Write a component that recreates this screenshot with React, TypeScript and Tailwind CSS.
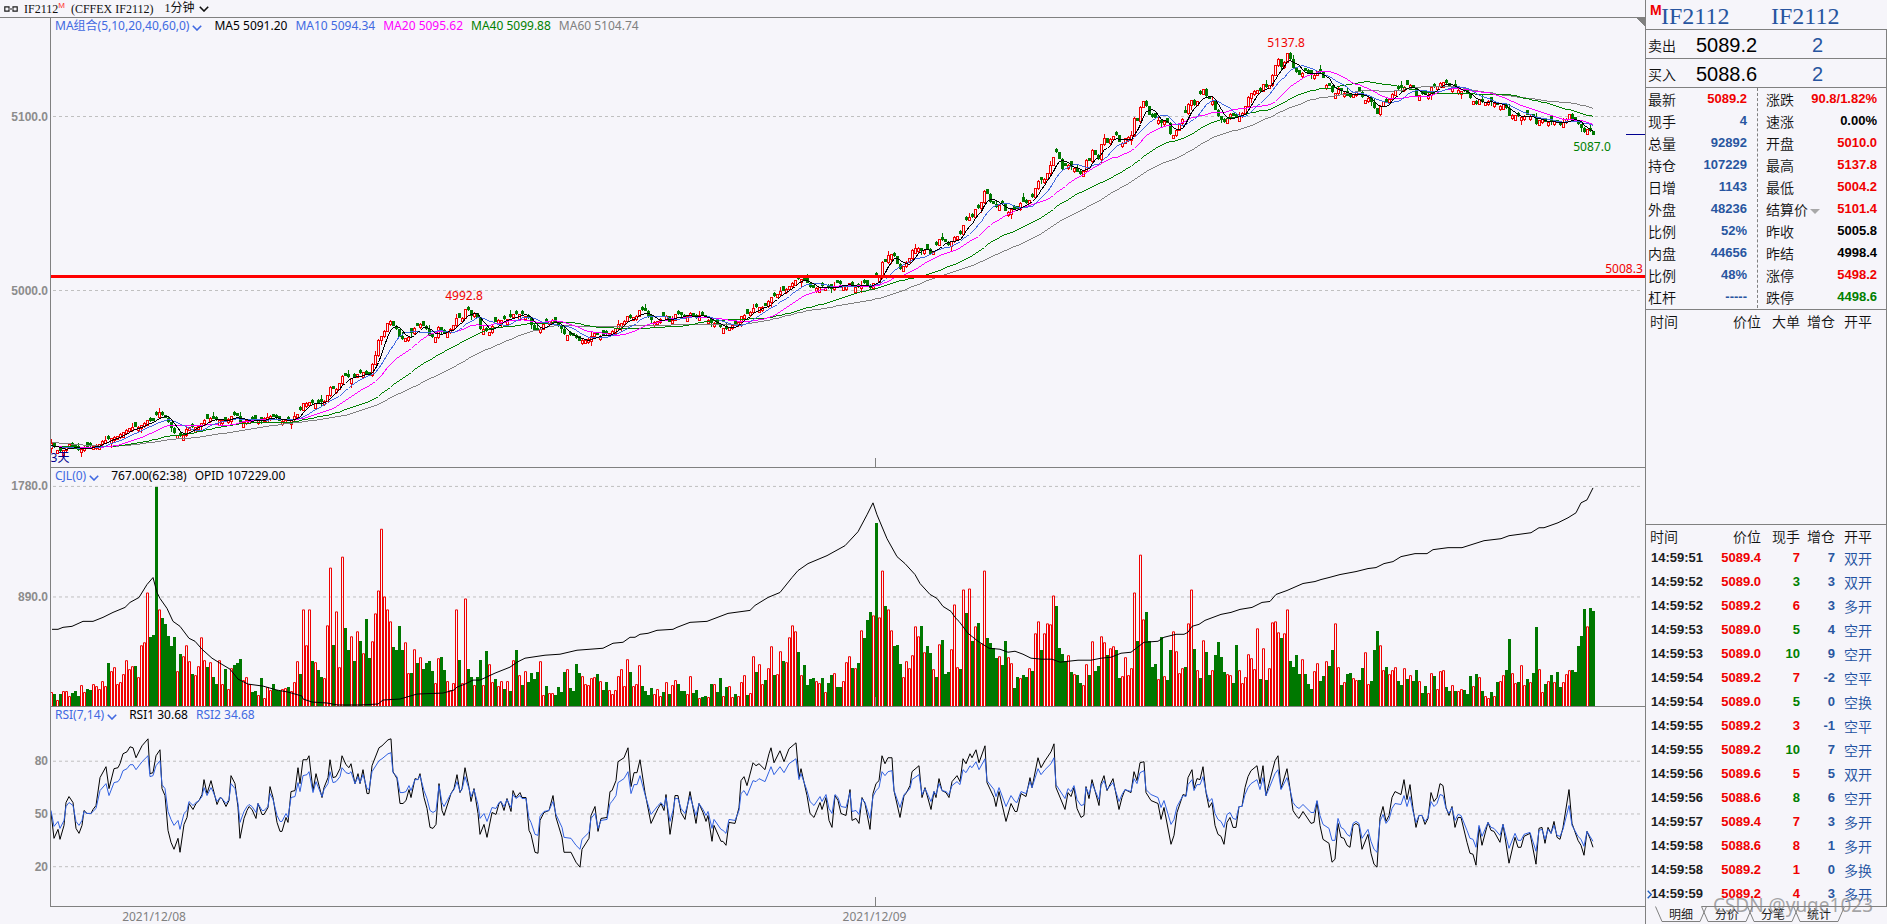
// Futures terminal: one-minute candles with moving averages, volume / open
// interest, RSI, and the quote panel with the latest trades.
//
// Series are kept in plot units (one bar every 3 units, y pointing down), so
// each pane only needs a viewBox to show its own slice.

import clsx from "clsx";
import type { ReactNode } from "react";

type Point = [number, number];

const FIRST_X = 50;
const BAR_STEP = 3;
const PLOT_LEFT = 51;
const PLOT_WIDTH = 1594;
const VOLUME_BASE = 706;

// Bar heights; positive closes up (red), negative closes down (green).
const VOLUMES: number[] = [
  14, -12, 6, -12, 15, 15, 10, -13, -15, -10, 21, 14, -17, -16, 22, 20, 17, 25, 20, -43,
  35, 39, 22, 24, 32, 46, 37, 40, -40, 29, 61, 64, 114, -69, -71, -220, 97, -88, -82, -70,
  -60, -69, 35, -52, 50, 61, 45, -32, 31, 40, 69, 46, -39, 44, -29, -22, 46, 22, -37, 17,
  38, -41, -43, -47, 26, 29, 22, -14, -15, 11, -28, 8, 19, 16, -22, -16, -15, 17, 18, -19,
  15, 24, 45, -32, 97, 61, 97, -45, 44, -36, -29, 28, 81, 139, -61, 95, 39, 150, -78, -56,
  70, -45, 75, -65, 53, -87, -48, 65, 93, 116, 178, 110, 97, 85, -59, -56, -80, -56, 64, 33,
  -33, 57, -43, 49, -37, -43, -45, -35, 23, 48, -49, -36, 25, 16, 23, 97, -46, 23, 108, -37,
  -29, 21, -29, -46, 21, -55, 42, 24, -27, 20, 25, -17, 25, -15, 46, -56, 31, -21, 35, -24,
  -33, -27, -34, 45, 11, -20, 13, 13, -11, -19, -14, -34, 37, -18, -15, -42, -33, 30, 22, 21,
  28, 29, -32, 25, -16, -24, 16, 12, 16, 30, 37, 20, 47, -34, 20, 22, 41, -20, -15, -11,
  -18, 12, 17, 10, -14, 24, -12, 21, 26, -22, -15, -15, 12, 30, -13, -16, 8, -9, -10, 9,
  -22, 22, -14, -28, 10, -19, 20, 9, -12, 10, 24, 31, -11, 13, 50, -34, 42, 22, -26, 38,
  60, -31, 32, 55, -45, 44, 69, 81, 75, -54, 31, -41, -21, -27, -28, 25, 23, -28, 14, -23,
  -31, 33, -19, -19, 25, 44, 50, -38, 38, -43, 76, -68, -86, -94, 91, -184, 89, 136, -100, 97,
  76, -60, -61, -42, 29, 45, 38, 51, 80, 70, -80, 54, -60, -53, 37, -29, 62, -66, -32, -34,
  57, 102, 39, -37, 117, -93, 118, -65, 80, -83, 63, 136, -68, -63, -58, -48, 50, -41, -65, 49,
  43, -18, -29, 28, -31, -29, 38, -35, 73, 85, -56, 73, 83, 82, 111, -100, -58, -52, -45, 51,
  -34, 32, -31, -23, 21, 42, -31, 65, -35, -40, 70, 64, -51, 58, 60, -56, -28, 30, 49, 31,
  38, 114, -65, 152, 87, -94, -65, -39, -42, 27, -69, 30, -26, -56, 75, 55, 33, 38, -39, 83,
  117, -57, 36, -28, 66, -54, -31, 36, -51, -64, -49, -34, 32, 31, -23, -61, 36, 23, 29, 52,
  48, 37, 78, -27, 58, -26, 38, 84, 85, 74, -68, 73, 97, -45, -39, -51, -32, 47, -32, -22,
  -17, 35, 43, -25, -30, 45, -40, -56, 83, 39, -21, 24, -32, -33, 28, 26, -26, -38, 54, 22,
  -25, -56, -75, 61, 36, -39, 32, 36, 39, -25, -21, 38, -27, 31, -25, -36, 25, -13, -20, 13,
  33, -30, 17, 35, 36, -19, -15, 21, -15, 15, 17, -16, -12, -30, 20, -32, 29, -15, 10, 8,
  -14, 10, -24, 25, 31, -36, -67, 33, 23, -24, 41, 21, -27, 24, -33, -79, 37, 14, -22, 25,
  -31, 24, -34, -19, 24, 32, 36, -36, -34, -60, -70, -97, 80, -98, -95,
];

const CLOSE_PATH = `
51,442 56,449 62,451 70,443 74,448 79,450 85,447 99,445 103,440 113,438 122,433 131,427 138,427 144,423 148,420
153,422 156,415 160,412 163,416 167,419 171,427 175,434 183,437 185,430 190,427 197,427 204,420 211,418 218,420
228,420 233,414 238,416 241,424 245,420 261,420 270,416 276,417 279,421 290,420 296,415 300,411 303,403 310,402
315,403 324,402 327,396 331,386 335,391 338,387 343,375 349,377 354,378 358,373 363,372 370,375 373,362 376,353
379,337 383,335 385,329 388,322 392,321 394,327 397,329 400,339 405,338 410,336 414,328 420,324 426,328 430,337
436,337 439,325 442,332 447,333 453,326 457,317 462,319 466,307 469,310 471,316 475,312 478,319 481,331 485,327
488,335 492,327 497,320 508,319 514,314 523,314 528,317 532,326 536,332 541,329 544,323 554,320 558,325 561,328
564,334 574,336 580,341 588,339 594,333 599,336 605,335 614,330 619,323 624,322 628,315 631,318 637,316 640,309
646,311 649,318 655,322 662,318 667,316 670,323 674,318 676,313 681,314 685,319 690,313 696,318 701,314 706,318
712,323 717,323 721,327 726,329 731,326 739,322 742,315 749,314 754,307 765,307 771,297 776,296 781,290 785,291
790,285 796,279 801,279 806,280 810,287 815,288 824,286 833,289 836,283 846,286 850,282 855,287 860,287 863,283
867,284 871,289 874,282 877,275 880,277 883,259 886,262 889,254 894,254 896,262 901,270 905,263 909,259 913,249
918,247 922,252 927,248 931,255 935,248 939,239 943,240 949,245 953,238 960,235 964,223 970,216 973,217 976,207
980,209 984,191 987,192 990,202 994,204 998,208 1001,201 1005,210 1007,213 1012,208 1017,210 1021,202 1028,203
1031,196 1033,197 1036,186 1039,180 1045,179 1050,166 1056,151 1059,157 1062,170 1067,164 1075,168 1079,174
1083,173 1087,158 1090,162 1092,149 1099,160 1101,145 1105,137 1109,146 1111,137 1116,134 1121,146 1124,139
1132,135 1134,118 1139,122 1141,102 1145,100 1148,112 1151,117 1157,118 1162,123 1166,120 1169,126 1171,136
1175,135 1178,125 1184,117 1188,105 1192,99 1195,106 1199,98 1203,88 1207,97 1212,100 1216,111 1219,117 1225,122
1230,114 1235,117 1241,115 1244,111 1248,98 1252,92 1257,89 1260,92 1264,83 1268,90 1273,73 1276,63 1279,58
1282,69 1285,60 1288,52 1291,60 1294,70 1300,75 1305,71 1314,76 1319,69 1323,76 1325,84 1331,87 1334,96 1338,87
1344,93 1350,98 1355,92 1361,92 1364,101 1369,98 1373,105 1378,115 1382,100 1388,102 1393,93 1396,89 1403,88
1410,84 1414,88 1417,97 1421,93 1428,96 1432,86 1437,87 1441,82 1446,82 1450,87 1457,90 1466,91 1470,98 1474,101
1477,105 1480,98 1484,104 1487,100 1494,103 1501,106 1505,103 1509,116 1514,114 1521,117 1528,115 1534,117
1537,125 1541,117 1546,123 1553,120 1560,125 1566,120 1569,113 1573,120 1578,123 1584,132 1589,128 1593,135`;

const OPEN_INTEREST_PATH = `
52,629 58,629 63,627 72,626 83,621 93,621 103,617 113,612 125,607 130,602 139,597 147,584 153,577 157,592 160,598
167,608 173,621 180,626 189,638 195,641 202,649 212,658 220,663 230,669 238,679 248,684 263,686 277,690 288,692
302,696 303,699 312,702 327,703 338,705 360,705 378,704 383,700 400,699 417,694 443,693 454,690 457,687 465,684
473,680 480,680 495,673 510,667 517,662 525,658 545,655 560,654 577,650 603,648 613,643 623,642 630,637 635,637
640,634 648,633 657,630 673,629 677,627 690,622 707,621 728,613 750,610 755,605 768,597 780,592 792,577 798,570
808,563 827,555 845,545 858,531 867,514 873,502 877,514 887,538 897,556 905,563 915,574 920,583 930,594 937,598
943,606 951,611 955,617 959,621 968,633 978,641 989,648 1000,649 1008,652 1015,651 1023,654 1031,658 1042,659
1052,659 1060,662 1078,660 1091,660 1101,658 1111,657 1121,653 1131,652 1144,642 1158,641 1164,637 1176,634
1184,634 1188,632 1192,626 1199,624 1205,620 1221,614 1231,612 1240,609 1252,607 1262,602 1270,601 1276,594
1287,590 1303,583 1315,581 1321,579 1329,577 1340,574 1356,571 1368,568 1376,567 1384,563 1393,561 1401,556
1415,553 1427,553 1433,549 1448,547 1462,547 1484,540 1501,538 1509,535 1531,532 1539,527 1544,527 1558,522
1568,517 1576,512 1581,502 1587,499 1593,487`;

const RSI_PATH = `
51,812 54,838 58,829 60,839 64,825 66,802 69,796 73,802 76,828 79,833 82,825 84,810 87,813 91,813 93,809 96,805
100,777 106,766 109,788 114,768 118,767 120,763 123,753 127,751 130,746 133,747 136,757 142,745 148,738 150,773
153,772 156,755 160,749 162,788 165,795 168,830 171,842 174,849 178,838 180,852 184,824 187,817 189,803 193,809
196,803 199,800 202,794 204,779 207,793 211,780 213,788 217,804 220,797 222,798 226,806 229,800 231,775 235,783
238,807 240,838 244,818 247,810 249,806 252,809 256,818 258,803 262,814 264,814 268,807 270,786 273,797 277,822
280,831 282,831 286,817 288,822 291,791 295,790 298,767 300,783 303,759 307,759 309,755 313,790 316,773 322,797
324,787 328,777 330,759 333,777 336,776 340,768 342,755 346,764 349,767 351,763 355,783 358,773 360,783 363,769
367,793 369,793 372,765 379,747 382,745 388,739 391,738 393,771 397,778 400,803 403,803 406,800 409,789 411,797
415,778 418,779 420,773 424,797 427,808 430,827 433,828 436,824 439,783 442,810 444,815 451,793 454,788 457,774
460,792 462,788 465,767 469,787 471,801 474,788 478,813 480,834 484,824 487,837 492,812 496,814 499,803 501,801
504,810 507,798 511,811 513,790 516,797 520,792 522,797 526,797 529,830 531,834 535,852 538,853 540,820 544,812
549,810 553,795 556,817 562,837 564,852 571,852 576,862 580,867 582,849 589,838 591,815 595,806 598,831 601,818
607,817 610,791 612,790 616,780 618,761 624,757 628,747 631,786 634,772 637,772 640,759 645,792 651,823 658,808
661,803 664,810 666,794 670,834 673,815 675,795 678,795 681,812 685,819 690,791 696,823 699,803 703,812 706,821
708,815 712,841 714,825 721,841 723,841 726,845 729,822 735,823 739,807 741,780 744,776 747,785 753,762 756,765
759,763 765,769 769,753 771,747 774,762 780,750 784,761 789,748 796,742 799,777 801,768 807,795 810,813 814,817
820,802 822,809 826,797 829,820 832,827 835,795 838,800 841,813 846,815 850,789 852,820 856,818 859,823 862,797
865,803 870,829 873,793 876,783 879,780 882,755 885,763 888,757 892,757 894,790 900,817 904,795 906,793 910,785
912,771 919,765 922,797 925,787 931,809 934,791 936,797 939,778 942,790 946,792 949,797 952,781 957,775 960,781
963,758 966,763 970,753 972,757 976,749 979,762 985,745 987,782 994,797 996,806 999,791 1006,821 1011,803
1015,811 1017,811 1021,793 1026,796 1030,777 1032,787 1038,757 1041,767 1045,760 1051,751 1054,743 1056,787
1065,809 1068,792 1071,796 1074,787 1077,808 1081,817 1084,815 1086,786 1089,798 1092,779 1099,805 1101,783
1104,775 1107,790 1113,778 1119,809 1122,797 1125,789 1131,792 1134,771 1137,780 1140,762 1144,761 1146,792
1151,800 1158,803 1161,819 1164,807 1171,844 1174,835 1177,812 1183,794 1186,795 1188,777 1192,769 1194,788
1197,778 1200,779 1203,766 1206,792 1209,807 1212,802 1215,825 1218,834 1221,836 1224,844 1227,822 1230,817
1233,827 1236,827 1239,806 1242,806 1245,787 1248,776 1251,770 1257,765 1260,783 1263,765 1266,795 1269,783
1275,760 1278,755 1281,788 1287,768 1290,788 1293,810 1296,815 1299,818 1303,811 1311,823 1314,822 1317,801
1320,825 1323,839 1329,843 1332,862 1335,859 1338,823 1341,837 1344,838 1347,845 1350,847 1353,825 1356,823
1359,825 1362,849 1368,834 1371,853 1374,864 1377,867 1380,817 1383,806 1386,821 1389,815 1392,797 1395,791
1401,794 1404,779 1407,799 1410,784 1413,808 1416,827 1419,815 1422,815 1425,824 1428,818 1431,792 1434,801
1437,797 1440,783 1443,785 1446,807 1449,815 1452,806 1455,827 1458,817 1461,817 1467,842 1470,853 1473,854
1476,865 1479,827 1482,845 1488,822 1491,830 1494,831 1500,842 1503,824 1509,863 1515,837 1518,847 1521,847
1524,836 1530,833 1536,864 1539,828 1542,827 1545,843 1548,827 1551,833 1554,821 1557,837 1560,839 1563,827
1569,789 1572,823 1578,840 1581,845 1584,855 1587,831 1590,838 1593,847`;

function parsePath(text: string): Point[] {
  return text
    .trim()
    .split(/\s+/)
    .map((pair) => pair.split(",").map(Number) as Point);
}

function sampleAt(points: Point[], x: number): number {
  const next = points.findIndex((p) => p[0] >= x);
  if (next < 0) return points[points.length - 1][1];
  if (next === 0) return points[0][1];
  const [x0, y0] = points[next - 1];
  const [x1, y1] = points[next];
  return y0 + ((y1 - y0) * (x - x0)) / (x1 - x0);
}

const barCenter = (i: number) => FIRST_X + i * BAR_STEP + 1.5;

const closePoints = parsePath(CLOSE_PATH);
const closes = VOLUMES.map((_, i) => Math.round(sampleAt(closePoints, barCenter(i))));

// Bars before the visible range, only needed to seed the averages.
const history = Array.from({ length: 60 }, (_, i) => (i < 20 ? 433 : 446));

function movingAverage(period: number): string {
  const all = [...history, ...closes];
  return closes
    .map((_, i) => {
      const end = i + history.length + 1;
      const window = all.slice(end - period, end);
      const mean = window.reduce((sum, v) => sum + v, 0) / period;
      return `${barCenter(i)},${Math.round(mean) + 0.5}`;
    })
    .join(" ");
}

function candlePaths(): { up: string; down: string } {
  let up = "";
  let down = "";
  VOLUMES.forEach((volume, i) => {
    const left = FIRST_X + i * BAR_STEP;
    const close = closes[i];
    const prev = i > 0 ? closes[i - 1] : close;
    const upperWick = (i * 7) % 9 === 0 ? 4 : (i * 3) % 2;
    const lowerWick = (i * 11) % 10 === 0 ? 4 : (i * 5) % 2;
    const body = (i * 5) % 4 === 0 ? 5 : 3;
    if (volume > 0) {
      const open = Math.max(prev, close + body);
      up += `M${left + 0.5} ${close + 0.5}h2V${open + 0.5}h-2Z`;
      up += `M${left + 1.5} ${close}v${-upperWick}M${left + 1.5} ${open + 1}v${lowerWick}`;
    } else {
      const open = Math.min(prev, close - body);
      down += `M${left} ${open}h3V${close}h-3Z`;
      down += `M${left + 1} ${open - upperWick}h1V${close + lowerWick}h-1Z`;
    }
  });
  return { up, down };
}

function volumePaths(): { up: string; down: string } {
  let up = "";
  let down = "";
  VOLUMES.forEach((volume, i) => {
    const left = FIRST_X + i * BAR_STEP;
    if (volume > 0) up += `M${left + 0.5} ${VOLUME_BASE}v${-volume + 0.5}h2v${volume}`;
    else down += `M${left} ${VOLUME_BASE}v${volume}h3V${VOLUME_BASE}Z`;
  });
  return { up, down };
}

// The slow RSI leans on a long exponential mean of the fast one.
function slowRsi(points: Point[]): string {
  let mean = 806;
  return points
    .map(([x, y]) => {
      mean += (y - mean) * 0.06;
      return `${x},${Math.round(y * 0.6 + mean * 0.4)}`;
    })
    .join(" ");
}

const candles = candlePaths();
const volumes = volumePaths();
const rsiPoints = parsePath(RSI_PATH);

const MA_LINES = [
  { period: 60, color: "#808080" },
  { period: 40, color: "#008000" },
  { period: 20, color: "#ff00ff" },
  { period: 10, color: "#4169e1" },
  { period: 5, color: "#000000" },
];

const NUM = "font-['Liberation_Sans',sans-serif] text-[13px] font-bold";
const CJK = "font-['Noto_Sans_CJK_SC',sans-serif] text-sm font-[350] text-[#101010]";
const CHART_TEXT = "font-['Noto_Sans','Noto_Sans_CJK_SC',sans-serif] text-xs leading-4";

function Chevron({ className }: { className?: string }) {
  return (
    <svg aria-hidden viewBox="0 0 10 6" className={clsx("h-[6px] w-[10px] shrink-0", className)} fill="none" stroke="currentColor" strokeWidth="1.6">
      <path d="M0.8 0.8 5 5 9.2 0.8" />
    </svg>
  );
}

interface PaneProps {
  top: number;
  height: number;
  ticks: { y: number; label: string }[];
  legend: ReactNode;
  overlay?: ReactNode;
  bordered?: boolean;
  growClass: string;
  children: ReactNode;
}

// Gutter with the scale on the left, plot on the right.
function Pane({ top, height, ticks, legend, overlay, bordered = true, growClass, children }: PaneProps) {
  return (
    <section className={clsx("flex min-h-0 basis-0", growClass)}>
      <div className="relative w-[50px] shrink-0">
        {ticks.map((t) => (
          <span
            key={t.label}
            className="absolute right-[2px] -translate-y-1/2 font-['Liberation_Sans',sans-serif] text-xs leading-4 font-bold text-[#8c8c8c]"
            style={{ top: `${((t.y + 1 - top) / height) * 100}%` }}
          >
            {t.label}
          </span>
        ))}
      </div>
      <div className={clsx("relative min-w-0 flex-1 border-l border-[#808080]", bordered && "border-t")}>
        <svg
          aria-hidden
          className="absolute inset-0 size-full"
          viewBox={`${PLOT_LEFT} ${top} ${PLOT_WIDTH} ${height}`}
          preserveAspectRatio="none"
          shapeRendering="crispEdges"
          fill="none"
        >
          {ticks.map((t) => (
            <path key={t.label} d={`M53 ${t.y + 0.5}H1643`} stroke="#c0c0c0" strokeDasharray="3 3" />
          ))}
          {children}
          <path d={`M875.5 ${top + height - 9}v9`} stroke="#808080" />
        </svg>
        <div className={clsx("relative flex h-4 items-center gap-2 pl-1 whitespace-nowrap", CHART_TEXT)}>{legend}</div>
        {overlay}
      </div>
    </section>
  );
}

function IndicatorMenu({ children }: { children: ReactNode }) {
  return (
    <button type="button" aria-haspopup="menu" className="mr-1 flex items-center gap-[3px] text-[#4169e1]">
      {children}
      <Chevron className="mt-1" />
    </button>
  );
}

interface ChartLabelProps {
  x: number;
  y: number;
  top: number;
  height: number;
  className: string;
  children: ReactNode;
}

function ChartLabel({ x, y, top, height, className, children }: ChartLabelProps) {
  return (
    <span
      className={clsx("absolute -translate-x-1/2 -translate-y-1/2 whitespace-nowrap", CHART_TEXT, className)}
      style={{ left: `${((x - PLOT_LEFT) / PLOT_WIDTH) * 100}%`, top: `${((y - top) / height) * 100}%` }}
    >
      {children}
    </span>
  );
}

function PricePane() {
  const box = { top: 18, height: 449 };
  return (
    <Pane
      {...box}
      growClass="grow-[449]"
      bordered={false}
      ticks={[
        { y: 116, label: "5100.0" },
        { y: 290, label: "5000.0" },
      ]}
      legend={
        <>
          <IndicatorMenu>MA组合(5,10,20,40,60,0)</IndicatorMenu>
          <span>MA5 5091.20</span>
          <span className="text-[#4169e1]">MA10 5094.34</span>
          <span className="text-[#ff00ff]">MA20 5095.62</span>
          <span className="text-[#008000]">MA40 5099.88</span>
          <span className="text-[#808080]">MA60 5104.74</span>
        </>
      }
      overlay={
        <>
          <ChartLabel {...box} x={464} y={296} className="text-[#f00000]">4992.8</ChartLabel>
          <ChartLabel {...box} x={1286} y={43} className="text-[#f00000]">5137.8</ChartLabel>
          <ChartLabel {...box} x={1592} y={147} className="text-[#008000]">5087.0</ChartLabel>
          <ChartLabel {...box} x={1624} y={269} className="text-[#f00000]">5008.3</ChartLabel>
          <ChartLabel {...box} x={60} y={458} className="text-[#000090]">3天</ChartLabel>
        </>
      }
    >
      <path d={candles.up} stroke="#f00000" />
      <path d={candles.down} fill="#007800" />
      {MA_LINES.map((line) => (
        <polyline key={line.period} points={movingAverage(line.period)} stroke={line.color} />
      ))}
      <path d="M51 275h1594v3H51Z" fill="#ff0000" />
      <path d="M1626 134.5h19" stroke="#000090" />
      <path d="M1636 18h9v9Z" fill="#808080" />
    </Pane>
  );
}

function VolumePane() {
  return (
    <Pane
      top={467}
      height={239}
      growClass="grow-[239]"
      ticks={[
        { y: 485, label: "1780.0" },
        { y: 596, label: "890.0" },
      ]}
      legend={
        <>
          <IndicatorMenu>CJL(0)</IndicatorMenu>
          <span>767.00(62:38)</span>
          <span>OPID 107229.00</span>
        </>
      }
    >
      <path d={volumes.up} stroke="#f00000" />
      <path d={volumes.down} fill="#007800" />
      <polyline points={OPEN_INTEREST_PATH.trim()} stroke="#000000" />
    </Pane>
  );
}

function RsiPane() {
  return (
    <Pane
      top={706}
      height={200}
      growClass="grow-[200]"
      ticks={[
        { y: 760, label: "80" },
        { y: 813, label: "50" },
        { y: 866, label: "20" },
      ]}
      legend={
        <>
          <IndicatorMenu>RSI(7,14)</IndicatorMenu>
          <span>RSI1 30.68</span>
          <span className="text-[#4169e1]">RSI2 34.68</span>
        </>
      }
    >
      <polyline points={RSI_PATH.trim()} stroke="#000000" />
      <polyline points={slowRsi(rsiPoints)} stroke="#3060e0" />
    </Pane>
  );
}

const DATES = [
  { x: 155, label: "2021/12/08" },
  { x: 875, label: "2021/12/09" },
];

function ChartColumn() {
  return (
    <main className="flex min-w-0 flex-1 flex-col">
      <header className="flex h-[18px] shrink-0 items-center border-b border-[#808080] pl-1 font-['Liberation_Serif','Noto_Sans_CJK_SC',serif] text-xs leading-4 text-[#101010]">
        <svg aria-hidden viewBox="0 0 14 6" className="mr-[6px] h-[6px] w-[14px]" fill="none" stroke="#1e1e1e" strokeWidth="1.2">
          <path d="M5 2V.8H.8v4.400H5V4M9 2V.8h4.200v4.400H9V4M4 3h6" />
        </svg>
        <h1 className="flex items-center">
          IF2112
          <sup className="relative top-[-3px] font-['Liberation_Sans',sans-serif] text-[8px] leading-3 text-[#ff3030]">M</sup>
          <span className="ml-[6px]">(CFFEX IF2112)</span>
        </h1>
        <label className="ml-2 flex items-center">
          <span className="sr-only">周期</span>
          <select className="field-sizing-content h-[17px] appearance-none bg-transparent pr-1 pl-[3px] leading-[17px] outline-none">
            <option>1分钟</option>
            <option>5分钟</option>
            <option>日线</option>
          </select>
          <Chevron />
        </label>
      </header>
      <PricePane />
      <VolumePane />
      <RsiPane />
      <footer className="flex h-[18px] shrink-0 pl-[50px]">
        <div className="relative flex-1 border-t border-[#808080]">
          {DATES.map((d) => (
            <time
              key={d.label}
              className={clsx("absolute top-[2px] -translate-x-1/2 text-[#808080]", CHART_TEXT)}
              style={{ left: `${((d.x - PLOT_LEFT) / PLOT_WIDTH) * 100}%` }}
            >
              {d.label}
            </time>
          ))}
        </div>
      </footer>
    </main>
  );
}

interface Stat {
  label: string;
  value: string;
  tone: Tone;
  menu?: boolean;
}

type Tone = "up" | "down" | "flat" | "blue";

const TONES: Record<Tone, string> = {
  up: "text-[#f00000]",
  down: "text-[#008000]",
  flat: "text-black",
  blue: "text-[#2855a0]",
};

const LEFT_STATS: Stat[] = [
  { label: "最新", value: "5089.2", tone: "up" },
  { label: "现手", value: "4", tone: "blue" },
  { label: "总量", value: "92892", tone: "blue" },
  { label: "持仓", value: "107229", tone: "blue" },
  { label: "日增", value: "1143", tone: "blue" },
  { label: "外盘", value: "48236", tone: "blue" },
  { label: "比例", value: "52%", tone: "blue" },
  { label: "内盘", value: "44656", tone: "blue" },
  { label: "比例", value: "48%", tone: "blue" },
  { label: "杠杆", value: "-----", tone: "blue" },
];

const RIGHT_STATS: Stat[] = [
  { label: "涨跌", value: "90.8/1.82%", tone: "up" },
  { label: "速涨", value: "0.00%", tone: "flat" },
  { label: "开盘", value: "5010.0", tone: "up" },
  { label: "最高", value: "5137.8", tone: "up" },
  { label: "最低", value: "5004.2", tone: "up" },
  { label: "结算价", value: "5101.4", tone: "up", menu: true },
  { label: "昨收", value: "5005.8", tone: "flat" },
  { label: "昨结", value: "4998.4", tone: "flat" },
  { label: "涨停", value: "5498.2", tone: "up" },
  { label: "跌停", value: "4498.6", tone: "down" },
];

function StatList({ stats, className }: { stats: Stat[]; className: string }) {
  return (
    <dl className={className}>
      {stats.map((s, i) => (
        <div key={i} className="flex h-[22px] items-center justify-between whitespace-nowrap">
          <dt className={CJK}>
            {s.menu ? (
              <button type="button" aria-haspopup="menu" className="flex items-center gap-[2px]">
                {s.label}
                <svg aria-hidden viewBox="0 0 10 5" className="mt-1 h-[5px] w-[10px]" fill="#a8a8a8">
                  <path d="M0 0h10L5 5Z" />
                </svg>
              </button>
            ) : (
              s.label
            )}
          </dt>
          <dd className={clsx(NUM, TONES[s.tone])}>{s.value}</dd>
        </div>
      ))}
    </dl>
  );
}

function BookRow({ side, price, lots }: { side: string; price: string; lots: string }) {
  return (
    <div className="flex h-[29px] shrink-0 items-center border-r border-b border-[#808080] pt-[2px] pl-[2px]">
      <span className={clsx(CJK, "w-12")}>{side}</span>
      <span className="w-[116px] font-['Liberation_Sans',sans-serif] text-xl leading-6 text-black">{price}</span>
      <span className="font-['Liberation_Sans',sans-serif] text-xl leading-6 text-[#2855a0]">{lots}</span>
    </div>
  );
}

type Trade = [time: string, price: string, lots: number, tone: Tone, change: number, kind: string];

const TRADES: Trade[] = [
  ["14:59:51", "5089.4", 7, "up", 7, "双开"],
  ["14:59:52", "5089.0", 3, "down", 3, "双开"],
  ["14:59:52", "5089.2", 6, "up", 3, "多开"],
  ["14:59:53", "5089.0", 5, "down", 4, "空开"],
  ["14:59:53", "5089.0", 10, "down", 9, "空开"],
  ["14:59:54", "5089.2", 7, "up", -2, "空平"],
  ["14:59:54", "5089.0", 5, "down", 0, "空换"],
  ["14:59:55", "5089.2", 3, "up", -1, "空平"],
  ["14:59:55", "5089.2", 10, "down", 7, "空开"],
  ["14:59:56", "5089.6", 5, "up", 5, "双开"],
  ["14:59:56", "5088.6", 8, "down", 6, "空开"],
  ["14:59:57", "5089.4", 7, "up", 3, "多开"],
  ["14:59:58", "5088.6", 8, "up", 1, "多开"],
  ["14:59:58", "5089.2", 1, "up", 0, "多换"],
  ["14:59:59", "5089.2", 4, "up", 3, "多开"],
];

function TradeTable({ sizeLabel, trades }: { sizeLabel: string; trades: Trade[] }) {
  return (
    <table className="w-full table-fixed border-collapse whitespace-nowrap">
      <colgroup>
        <col className="w-[58px]" />
        <col className="w-[57px]" />
        <col className="w-[39px]" />
        <col className="w-[35px]" />
        <col />
      </colgroup>
      <thead>
        <tr className={clsx(CJK, "h-[21px] text-right leading-5")}>
          <th className="pl-1 text-left font-[350]">时间</th>
          <th className="font-[350]">价位</th>
          <th className="font-[350]">{sizeLabel}</th>
          <th className="font-[350]">增仓</th>
          <th className="pl-[9px] text-left font-[350]">开平</th>
        </tr>
      </thead>
      <tbody>
        {trades.map(([time, price, lots, tone, change, kind], i) => (
          <tr key={i} className={clsx(NUM, "h-6 text-right leading-5")}>
            <td className="relative pl-[5px] text-left text-[#1e1e1e]">
              {i === trades.length - 1 && (
                <svg aria-hidden viewBox="0 0 5 9" className="absolute top-2 left-[1px] h-[9px] w-[5px]" fill="none" stroke="#2060c0" strokeWidth="1.4">
                  <path d="M.7.7 4.300 4.500.7 8.300" />
                </svg>
              )}
              {time}
            </td>
            <td className="text-[#f00000]">{price}</td>
            <td className={TONES[tone]}>{lots}</td>
            <td className="text-[#2855a0]">{change}</td>
            <td className="pl-[9px] text-left font-['Noto_Sans_CJK_SC',sans-serif] text-sm leading-5 font-[350] text-[#2050a0]">{kind}</td>
          </tr>
        ))}
      </tbody>
    </table>
  );
}

function DetailTabs() {
  return (
    <div role="tablist" className="flex h-[18px] shrink-0 pl-[9px]">
      {["明细", "分价", "分笔", "统计"].map((label, i) => (
        <button
          key={label}
          type="button"
          role="tab"
          aria-selected={i === 0}
          className="relative -mr-[6px] h-4 w-[52px] font-['Noto_Sans_CJK_SC',sans-serif] text-xs leading-4 text-[#1e1e1e]"
        >
          <svg aria-hidden viewBox="0 0 52 16" className="absolute inset-0 size-full" fill="none" stroke="#808080">
            <path d={i === 0 ? "M.5.5 7 15.500H45L51.500.5" : "M.5.5 7 15.500H45L51.500.5H.5"} />
          </svg>
          <span className="relative">{label}</span>
        </button>
      ))}
      <span aria-hidden className="ml-[6px] flex-1 border-t border-[#808080]" />
    </div>
  );
}

function QuotePanel() {
  return (
    <aside className="relative flex w-[242px] shrink-0 flex-col border-l border-[#808080]">
      <div className="flex h-[30px] shrink-0 items-center border-b border-[#808080] pt-[2px] pl-1 font-['Liberation_Serif',serif] text-2xl leading-7 text-[#2855a0]">
        <span className="w-[11px] self-start font-['Liberation_Sans',sans-serif] text-sm leading-4 font-bold text-[#f00000]">M</span>
        <span className="w-[110px]">IF2112</span>
        <span>IF2112</span>
      </div>
      <BookRow side="卖出" price="5089.2" lots="2" />
      <BookRow side="买入" price="5088.6" lots="2" />
      <div className="flex shrink-0 border-r border-b border-[#808080] pb-px pl-[2px]">
        <StatList stats={LEFT_STATS} className="w-[110px] border-r border-dashed border-[#808080] pr-[10px]" />
        <StatList stats={RIGHT_STATS} className="flex-1 pr-[9px] pl-2" />
      </div>
      <div className="flex-1 border-r border-b border-[#808080]">
        <TradeTable sizeLabel="大单" trades={[]} />
      </div>
      <div className="shrink-0 border-r border-[#808080]">
        <TradeTable sizeLabel="现手" trades={TRADES} />
      </div>
      <DetailTabs />
      <p className="pointer-events-none absolute right-[14px] bottom-[5px] font-['Noto_Sans',sans-serif] text-[19px] leading-7 text-[#808080]/70">
        CSDN @yuge1023
      </p>
    </aside>
  );
}

export default function App() {
  return (
    <div className="flex h-screen bg-[#f6f5fa] text-black">
      <ChartColumn />
      <QuotePanel />
    </div>
  );
}
